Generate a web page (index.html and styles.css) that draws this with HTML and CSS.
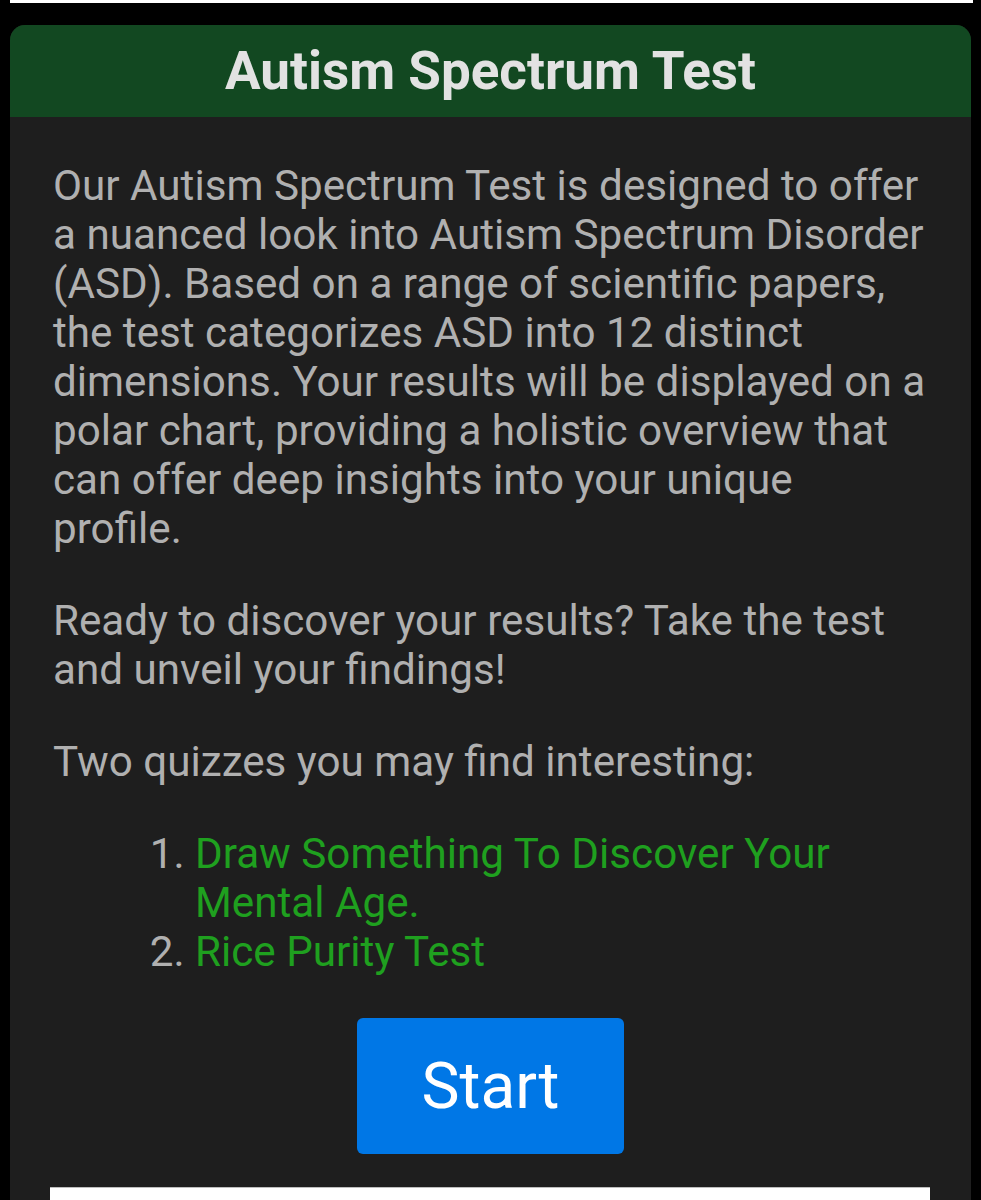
FILE: index.html
```html
<!DOCTYPE html>
<html lang="en">
<head>
<meta charset="utf-8">
<title>Autism Spectrum Test</title>
<link rel="stylesheet" href="styles.css">
</head>
<body>
<div class="topbar"></div>
<div class="card">
  <div class="card-header">
    <h1 class="title">Autism Spectrum Test</h1>
  </div>
  <div class="card-body">
    <p class="text">Our Autism Spectrum Test is designed to offer a nuanced look into Autism Spectrum Disorder (ASD). Based on a range of scientific papers, the test categorizes ASD into 12 distinct dimensions. Your results will be displayed on a polar chart, providing a holistic overview that can offer deep insights into your unique profile.</p>
    <p class="text">Ready to discover your results? Take the test and unveil your findings!</p>
    <p class="text">Two quizzes you may find interesting:</p>
    <ol class="quiz-list">
      <li><a class="quiz-link" href="#">Draw Something To Discover Your Mental Age.</a></li>
      <li><a class="quiz-link" href="#">Rice Purity Test</a></li>
    </ol>
    <div class="actions">
      <button class="start-btn" type="button">Start</button>
    </div>
    <div class="below-box"></div>
  </div>
</div>
</body>
</html>
```
FILE: styles.css
```css
html, body {
  margin: 0;
  padding: 0;
  background: #000;
}
body {
  font-family: Roboto, "Liberation Sans", sans-serif;
  height: 1200px;
  overflow: hidden;
}
.topbar {
  height: 3px;
  margin-left: 10px;
  width: 963px;
  background: #fff;
}
.card {
  margin: 22px 10px 0;
  background: #1e1e1e;
  border-radius: 15px 15px 0 0;
  overflow: hidden;
}
.card-header {
  height: 92px;
  background: #124821;
  display: flex;
  align-items: center;
  justify-content: center;
}
.title {
  margin: 0;
  font-size: 53px;
  font-weight: 700;
  color: #e2e2e2;
  line-height: 1;
}
.card-body {
  padding: 44px 43px 0 43px;
}
.text {
  margin: 0 0 43px;
  font-size: 42.2px;
  line-height: 49px;
  color: #b0b0b0;
}
.quiz-list {
  margin: 0;
  padding-left: 142px;
  font-size: 42.2px;
  line-height: 49px;
  color: #b0b0b0;
}
.quiz-link {
  color: #1fa01f;
  text-decoration: none;
}
.actions {
  display: flex;
  justify-content: center;
  margin-top: 42px;
}
.start-btn {
  height: 136px;
  width: 267px;
  border: none;
  border-radius: 6px;
  background: #0077e6;
  color: #fff;
  font-family: Roboto, "Liberation Sans", sans-serif;
  font-size: 64px;
  padding: 0;
}
.below-box {
  margin: 33px 0 0 -3px;
  width: 880px;
  height: 13px;
  background: #fff;
  border-top: 1px solid #bdbdbd;
}
```
